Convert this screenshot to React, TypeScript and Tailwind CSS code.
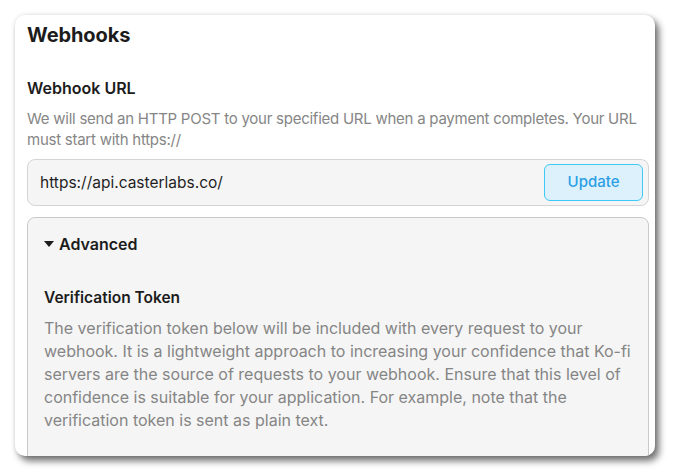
import React from 'react';

const App: React.FC = () => {
    return (
        <div className="w-[676px] h-[476px] bg-white p-[15px] font-['Inter',sans-serif]">
            <div className="w-[640px] h-[441px] bg-white rounded-[10px] overflow-hidden shadow-[4px_5px_7px_rgba(0,0,0,0.55),0_0_4px_rgba(0,0,0,0.12)] pl-3 pr-1.5 pt-1.5">
                <h2 className="text-[20px] leading-7 font-bold text-[#1c1c1c] tracking-[-0.1px]">Webhooks</h2>

                <h3 className="mt-[27px] text-[16px] leading-6 font-semibold text-[#1c1c1c]">Webhook URL</h3>
                <p className="mt-[8px] text-[15px] leading-[21px] tracking-[-0.25px] text-[#868686]">
                    We will send an HTTP POST to your specified URL when a payment completes. Your URL must start with https://
                </p>

                <div className="mt-[9px] h-[47px] flex items-center justify-between bg-[#f5f5f5] border border-[#d4d4d4] rounded-lg pl-3 pr-[5px]">
                    <span className="text-[15.5px] text-[#1f1f1f]">https://api.casterlabs.co/</span>
                    <button className="w-[99px] h-[37px] rounded-md bg-[#ddf1fd] border border-[#3fc9f6] text-[#2a9fe4] text-[15px] font-medium">
                        Update
                    </button>
                </div>

                <div className="mt-[11px] h-[300px] bg-[#f5f5f5] border border-[#c9c9c9] rounded-lg px-4 pt-[14px]">
                    <div className="flex items-center gap-[5px] text-[16px] leading-6 font-semibold text-[#1c1c1c]">
                        <svg width="10" height="7" viewBox="0 0 10 7" className="mt-[1px]">
                            <path d="M0 0 H10 L5 6 Z" fill="#1c1c1c" />
                        </svg>
                        Advanced
                    </div>

                    <h4 className="mt-[30px] text-[15.5px] leading-6 font-semibold text-[#1c1c1c]">Verification Token</h4>
                    <p className="mt-[7px] text-[16px] leading-[23px] text-[#858585]">
                        The verification token below will be included with every request to your webhook. It is a lightweight approach to increasing your confidence that Ko-fi servers are the source of requests to your webhook. Ensure that this level of confidence is suitable for your application. For example, note that the verification token is sent as plain text.
                    </p>
                </div>
            </div>
        </div>
    );
};

export default App;
